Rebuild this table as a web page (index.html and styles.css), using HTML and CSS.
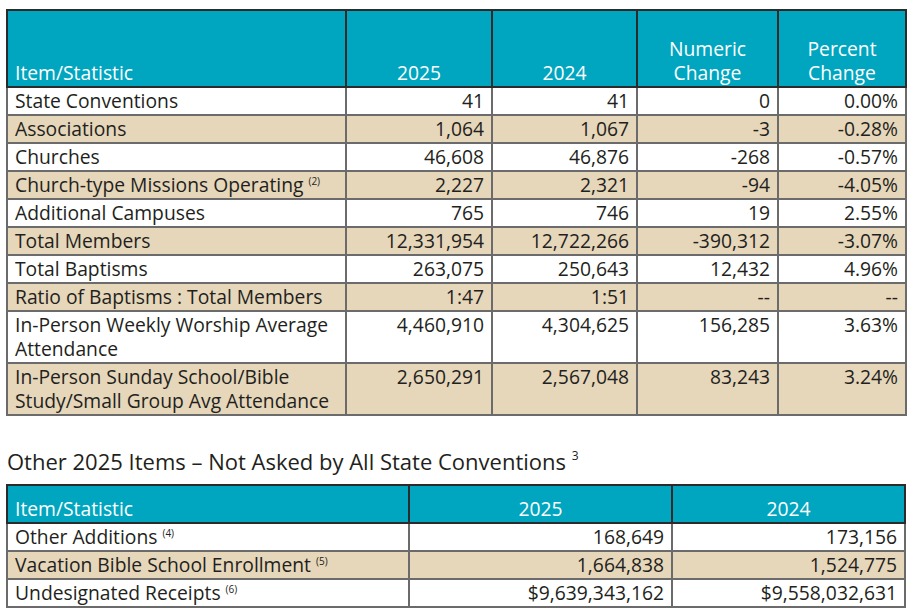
FILE: index.html
```html
<!DOCTYPE html>
<html lang="en">
<head>
    <meta charset="UTF-8">
    <meta name="viewport" content="width=device-width, initial-scale=1.0">
    <title>Annual Church Profile Summary</title>
    <link rel="stylesheet" href="styles.css">
</head>
<body>
    <table class="stats main">
        <colgroup>
            <col class="c-item">
            <col class="c-2025">
            <col class="c-2024">
            <col class="c-num">
            <col class="c-pct">
        </colgroup>
        <tr class="head tall">
            <th class="left">Item/Statistic</th>
            <th>2025</th>
            <th>2024</th>
            <th>Numeric<br>Change</th>
            <th>Percent<br>Change</th>
        </tr>
        <tr>
            <td>State Conventions</td>
            <td class="num">41</td>
            <td class="num">41</td>
            <td class="num">0</td>
            <td class="num">0.00%</td>
        </tr>
        <tr class="alt">
            <td>Associations</td>
            <td class="num">1,064</td>
            <td class="num">1,067</td>
            <td class="num">-3</td>
            <td class="num">-0.28%</td>
        </tr>
        <tr>
            <td>Churches</td>
            <td class="num">46,608</td>
            <td class="num">46,876</td>
            <td class="num">-268</td>
            <td class="num">-0.57%</td>
        </tr>
        <tr class="alt">
            <td>Church-type Missions Operating <sup>(2)</sup></td>
            <td class="num">2,227</td>
            <td class="num">2,321</td>
            <td class="num">-94</td>
            <td class="num">-4.05%</td>
        </tr>
        <tr>
            <td>Additional Campuses</td>
            <td class="num">765</td>
            <td class="num">746</td>
            <td class="num">19</td>
            <td class="num">2.55%</td>
        </tr>
        <tr class="alt">
            <td>Total Members</td>
            <td class="num">12,331,954</td>
            <td class="num">12,722,266</td>
            <td class="num">-390,312</td>
            <td class="num">-3.07%</td>
        </tr>
        <tr>
            <td>Total Baptisms</td>
            <td class="num">263,075</td>
            <td class="num">250,643</td>
            <td class="num">12,432</td>
            <td class="num">4.96%</td>
        </tr>
        <tr class="alt">
            <td>Ratio of Baptisms : Total Members</td>
            <td class="num">1:47</td>
            <td class="num">1:51</td>
            <td class="num">--</td>
            <td class="num">--</td>
        </tr>
        <tr>
            <td>In-Person Weekly Worship Average Attendance</td>
            <td class="num">4,460,910</td>
            <td class="num">4,304,625</td>
            <td class="num">156,285</td>
            <td class="num">3.63%</td>
        </tr>
        <tr class="alt">
            <td>In-Person Sunday School/Bible Study/Small Group Avg Attendance</td>
            <td class="num">2,650,291</td>
            <td class="num">2,567,048</td>
            <td class="num">83,243</td>
            <td class="num">3.24%</td>
        </tr>
    </table>

    <h2 class="section-title">Other 2025 Items &ndash; Not Asked by All State Conventions <sup>3</sup></h2>

    <table class="stats other">
        <colgroup>
            <col class="o-item">
            <col class="o-2025">
            <col class="o-2024">
        </colgroup>
        <tr class="head">
            <th class="left">Item/Statistic</th>
            <th>2025</th>
            <th>2024</th>
        </tr>
        <tr>
            <td>Other Additions <sup>(4)</sup></td>
            <td class="num">168,649</td>
            <td class="num">173,156</td>
        </tr>
        <tr class="alt">
            <td>Vacation Bible School Enrollment <sup>(5)</sup></td>
            <td class="num">1,664,838</td>
            <td class="num">1,524,775</td>
        </tr>
        <tr>
            <td>Undesignated Receipts <sup>(6)</sup></td>
            <td class="num">$9,639,343,162</td>
            <td class="num">$9,558,032,631</td>
        </tr>
    </table>
</body>
</html>
```

FILE: styles.css
```css
body {
    font-family: "Open Sans", Lato, sans-serif;
    font-size: 19.3px;
    color: #231f20;
    margin: 0;
    padding: 9px 0 0 6px;
    background: #fff;
}
table.stats {
    border-collapse: collapse;
    table-layout: fixed;
}
table.main {
    width: 899px;
}
.c-item { width: 339px; }
.c-2025 { width: 146px; }
.c-2024 { width: 145px; }
.c-num { width: 141px; }
.c-pct { width: 128px; }

table.other {
    width: 898px;
}
.o-item { width: 402px; }
.o-2025 { width: 263px; }
.o-2024 { width: 233px; }

th, td {
    border: 2px solid #6b6b6b;
    padding: 1px 7px;
    line-height: 24px;
    vertical-align: top;
    text-align: left;
}
.head th {
    background-color: #00a6bf;
    color: #fff;
    font-weight: normal;
    text-align: center;
    vertical-align: bottom;
    border-color: #2b2b2b;
    padding: 11px 7px 1px;
}
.head.tall th {
    height: 69px;
    padding-top: 5px;
}
.head th.left {
    text-align: left;
}
.alt td {
    background-color: #e6d6ba;
}
td.num {
    text-align: right;
}
sup {
    font-size: 10px;
    line-height: 0;
    vertical-align: 7px;
}
.section-title {
    font-size: 22px;
    font-weight: normal;
    margin: 32px 0 10px 1px;
    line-height: 26px;
}
.section-title sup {
    font-size: 12px;
    vertical-align: 10px;
}
```
